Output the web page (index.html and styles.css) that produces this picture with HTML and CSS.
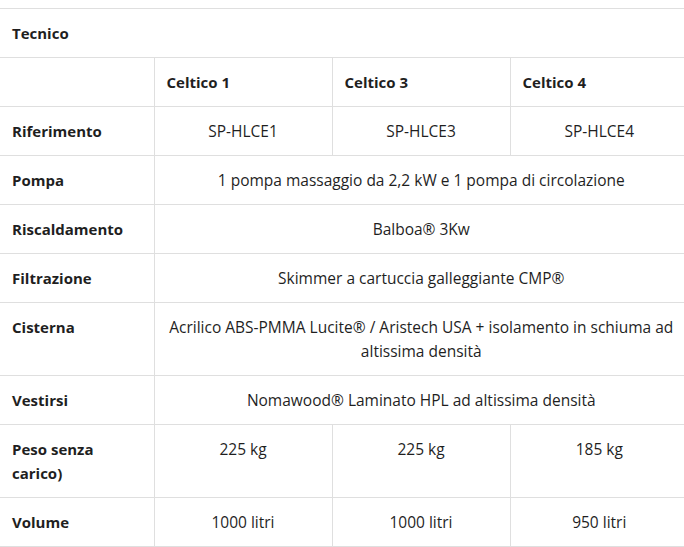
FILE: index.html
```html
<!DOCTYPE html>
<html lang="it">
<head>
<meta charset="utf-8">
<title>Tecnico</title>
<link rel="stylesheet" href="styles.css">
</head>
<body>
<div class="wrap">
<table class="spec">
  <colgroup>
    <col class="c-label">
    <col class="c-model">
    <col class="c-model">
    <col class="c-model">
  </colgroup>
  <thead>
    <tr><th class="title" colspan="4">Tecnico</th></tr>
  </thead>
  <tbody>
    <tr>
      <td class="label"></td>
      <th class="model">Celtico 1</th>
      <th class="model">Celtico 3</th>
      <th class="model">Celtico 4</th>
    </tr>
    <tr>
      <th class="label">Riferimento</th>
      <td>SP-HLCE1</td>
      <td>SP-HLCE3</td>
      <td>SP-HLCE4</td>
    </tr>
    <tr>
      <th class="label">Pompa</th>
      <td colspan="3">1 pompa massaggio da 2,2 kW e 1 pompa di circolazione</td>
    </tr>
    <tr>
      <th class="label">Riscaldamento</th>
      <td colspan="3">Balboa® 3Kw</td>
    </tr>
    <tr>
      <th class="label">Filtrazione</th>
      <td colspan="3">Skimmer a cartuccia galleggiante CMP®</td>
    </tr>
    <tr>
      <th class="label">Cisterna</th>
      <td colspan="3">Acrilico ABS-PMMA Lucite® / Aristech USA + isolamento in schiuma ad altissima densità</td>
    </tr>
    <tr>
      <th class="label">Vestirsi</th>
      <td colspan="3">Nomawood® Laminato HPL ad altissima densità</td>
    </tr>
    <tr>
      <th class="label">Peso senza carico)</th>
      <td>225 kg</td>
      <td>225 kg</td>
      <td>185 kg</td>
    </tr>
    <tr>
      <th class="label">Volume</th>
      <td>1000 litri</td>
      <td>1000 litri</td>
      <td>950 litri</td>
    </tr>
  </tbody>
</table>
</div>
</body>
</html>
```
FILE: styles.css
```css
html, body {
  margin: 0;
  padding: 0;
  background: #ffffff;
  overflow: hidden;
}

.wrap {
  padding-top: 8px;
  width: 688px;
}

.spec {
  width: 688px;
  border-collapse: collapse;
  table-layout: fixed;
  font-family: "Open Sans", "Noto Sans", sans-serif;
  font-size: 15.5px;
  line-height: 24px;
  color: #1f1f1f;
}

.c-label { width: 154px; }
.c-model { width: 178px; }

.spec th,
.spec td {
  padding: 12px 12px;
  border-top: 1px solid #dfdfdf;
  border-bottom: 1px solid #dfdfdf;
  border-left: 1px solid #dfdfdf;
  vertical-align: top;
  text-align: center;
  font-weight: 400;
}

.spec tr > :first-child {
  border-left: none;
}

.spec .title {
  text-align: left;
  font-weight: 700;
  font-size: 15px;
}

.spec .label,
.spec .model {
  text-align: left;
  font-weight: 700;
  font-size: 15px;
}
```
